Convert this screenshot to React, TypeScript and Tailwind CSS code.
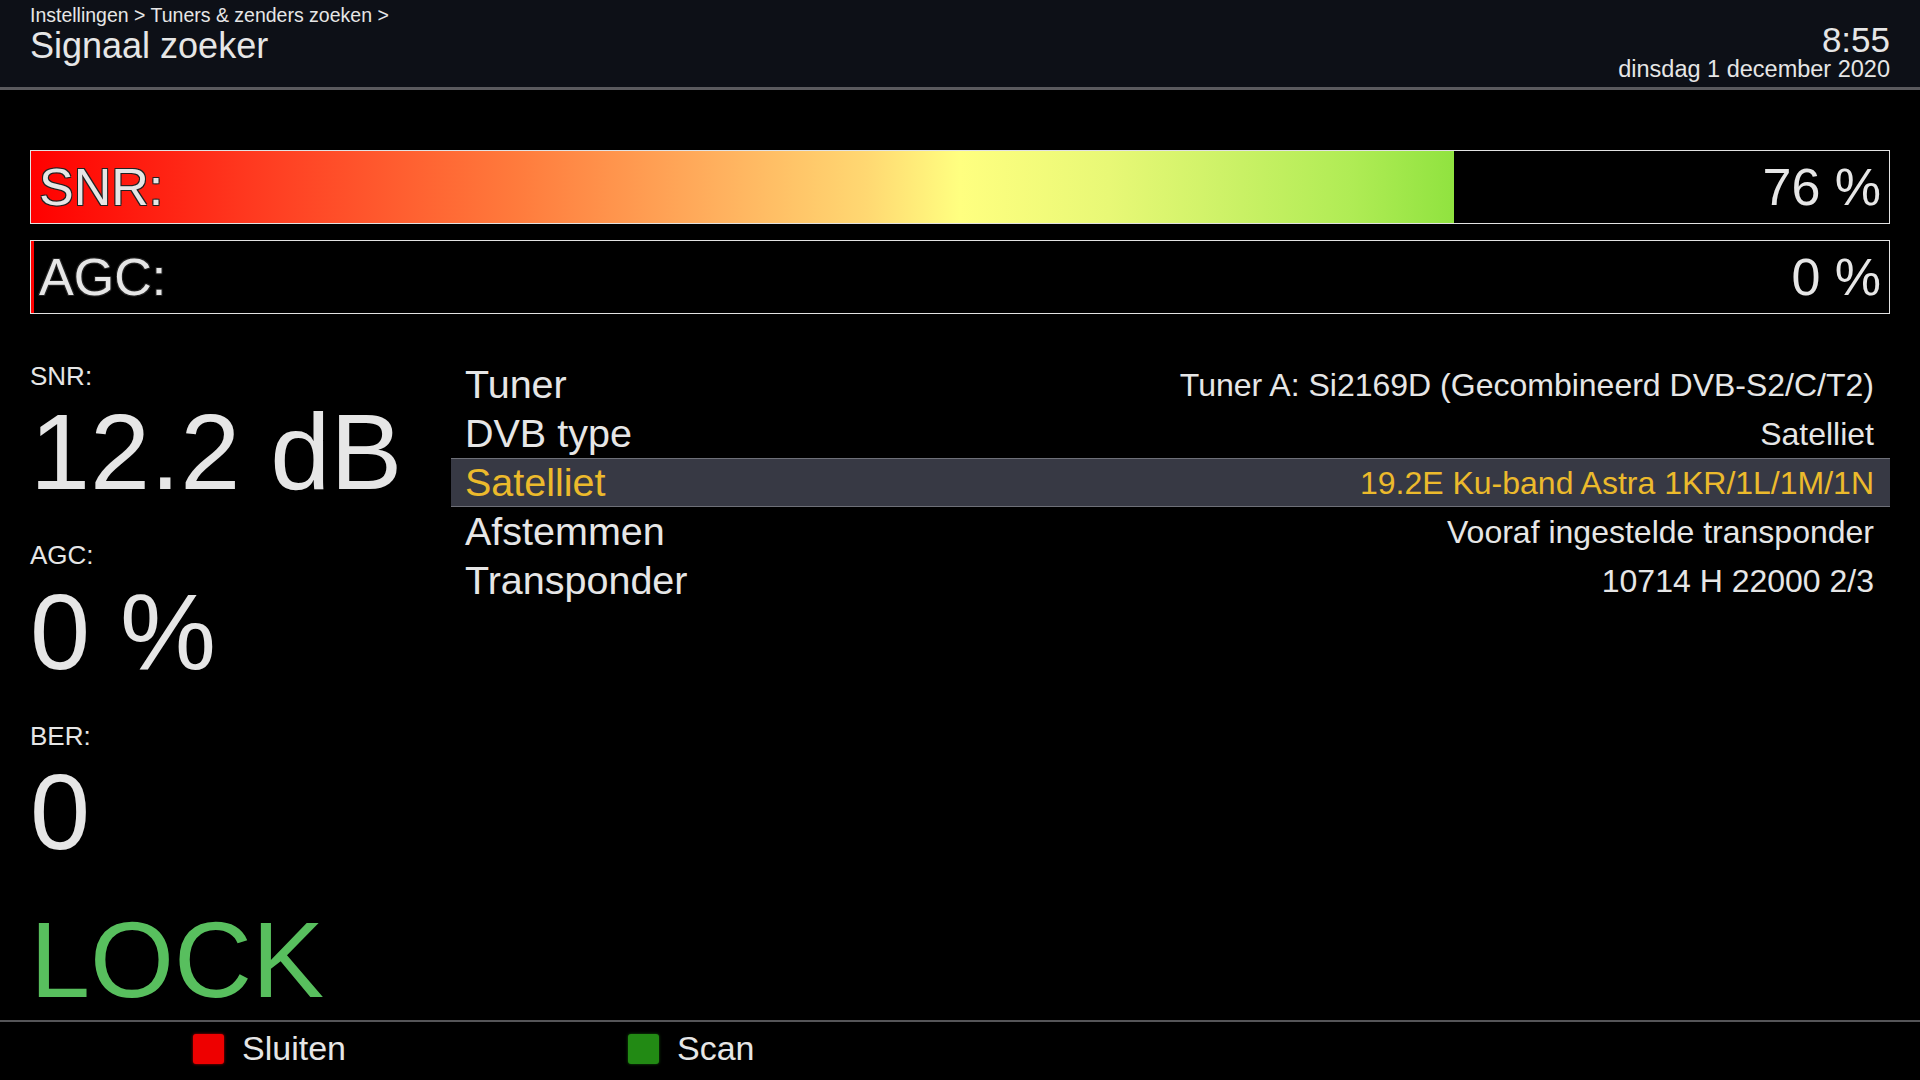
import React from "react";

const ROWS = [
  { label: "Tuner", value: "Tuner A: Si2169D (Gecombineerd DVB-S2/C/T2)" },
  { label: "DVB type", value: "Satelliet" },
  { label: "Satelliet", value: "19.2E Ku-band Astra 1KR/1L/1M/1N", selected: true },
  { label: "Afstemmen", value: "Vooraf ingestelde transponder" },
  { label: "Transponder", value: "10714 H 22000 2/3" },
];

function SignalBar({ label, level }: { label: string; level: number }) {
  const fill = Math.max(level, 0.17);
  return (
    <div className="relative h-[74px] border border-[#e2e2e2] bg-black">
      <div
        className="h-full bg-[linear-gradient(90deg,#ff0000_0%,#ff3a20_12%,#ff7a3c_26%,#ffb05e_37%,#ffd872_45%,#ffff80_50%,#e8f876_58%,#cef268_64%,#b0ec55_71%,#8ee23e_77%,#4ed020_100%)] bg-no-repeat"
        style={{ width: `${fill}%`, backgroundSize: `${10000 / fill}% 100%` }}
      />
      <div className="absolute inset-0 flex items-center justify-between pl-[8px] pr-[8px] text-[52px] leading-none text-[#e6e6e6]">
        <span className="[text-shadow:-1px_-1px_0_#222,1px_-1px_0_#222,-1px_1px_0_#222,1px_1px_0_#222]">{label}</span>
        <span>{Math.floor(level)} %</span>
      </div>
    </div>
  );
}

export default function App() {
  return (
    <div className="w-[1920px] h-[1080px] bg-black overflow-hidden flex flex-col font-['Liberation_Sans',Arial,sans-serif] text-[#e6e6e6]">
      {/* Header */}
      <div className="h-[90px] shrink-0 bg-[#0d1017] border-b-[3px] border-[#5a5a5e] flex justify-between pl-[30px] pr-[30px]">
        <div className="pt-[6px]">
          <div className="text-[19.5px] leading-none">Instellingen &gt; Tuners &amp; zenders zoeken &gt;</div>
          <div className="text-[36px] leading-none mt-[2px]">Signaal zoeker</div>
        </div>
        <div className="pt-[22px] text-right">
          <div className="text-[35px] leading-[36px]">8:55</div>
          <div className="text-[23.5px] leading-none">dinsdag 1 december 2020</div>
        </div>
      </div>

      {/* Body */}
      <div className="flex-1 min-h-0 px-[30px] pt-[60px] flex flex-col">
        <div className="flex flex-col gap-[16px]">
          <SignalBar label="SNR:" level={76.6} />
          <SignalBar label="AGC:" level={0} />
        </div>

        <div className="flex mt-[46px]">
          {/* Left stats */}
          <div className="w-[421px] shrink-0 flex flex-col">
            <div className="text-[26px] leading-[30px] mt-[1px]">SNR:</div>
            <div className="text-[108px] leading-[110px] mt-[6px] whitespace-nowrap">12.2 dB</div>
            <div className="text-[26px] leading-[30px] mt-[33px]">AGC:</div>
            <div className="text-[108px] leading-[110px] mt-[7px] whitespace-nowrap">0 %</div>
            <div className="text-[26px] leading-[30px] mt-[34px]">BER:</div>
            <div className="text-[108px] leading-[110px] mt-[6px]">0</div>
            <div className="text-[108px] leading-[108px] mt-[39px] text-[#58bf5e]">LOCK</div>
          </div>

          {/* Tuner list */}
          <div className="flex-1 flex flex-col">
            {ROWS.map((r) => (
              <div
                key={r.label}
                className={`h-[49px] flex items-center justify-between pl-[14px] pr-[16px] ${
                  r.selected ? "bg-[#373944] border-y border-[#6e7078] text-[#ecba2c]" : ""
                }`}
              >
                <span className="text-[39.5px] leading-none">{r.label}</span>
                <span className="text-[32px] leading-none">{r.value}</span>
              </div>
            ))}
          </div>
        </div>
      </div>

      {/* Footer */}
      <div className="h-[60px] shrink-0 border-t-2 border-[#555558] flex items-start pt-[11px] pl-[193px]">
        <div className="w-[435px] flex items-center">
          <div className="w-[31px] h-[30px] rounded-[3px] bg-[#ee0000] shadow-[0_0_3px_#b00000]" />
          <span className="ml-[18px] text-[34px] leading-none -mt-[2px]">Sluiten</span>
        </div>
        <div className="flex items-center">
          <div className="w-[31px] h-[30px] rounded-[3px] bg-[#228a14] shadow-[0_0_3px_#145a0c]" />
          <span className="ml-[18px] text-[34px] leading-none -mt-[2px]">Scan</span>
        </div>
      </div>
    </div>
  );
}
